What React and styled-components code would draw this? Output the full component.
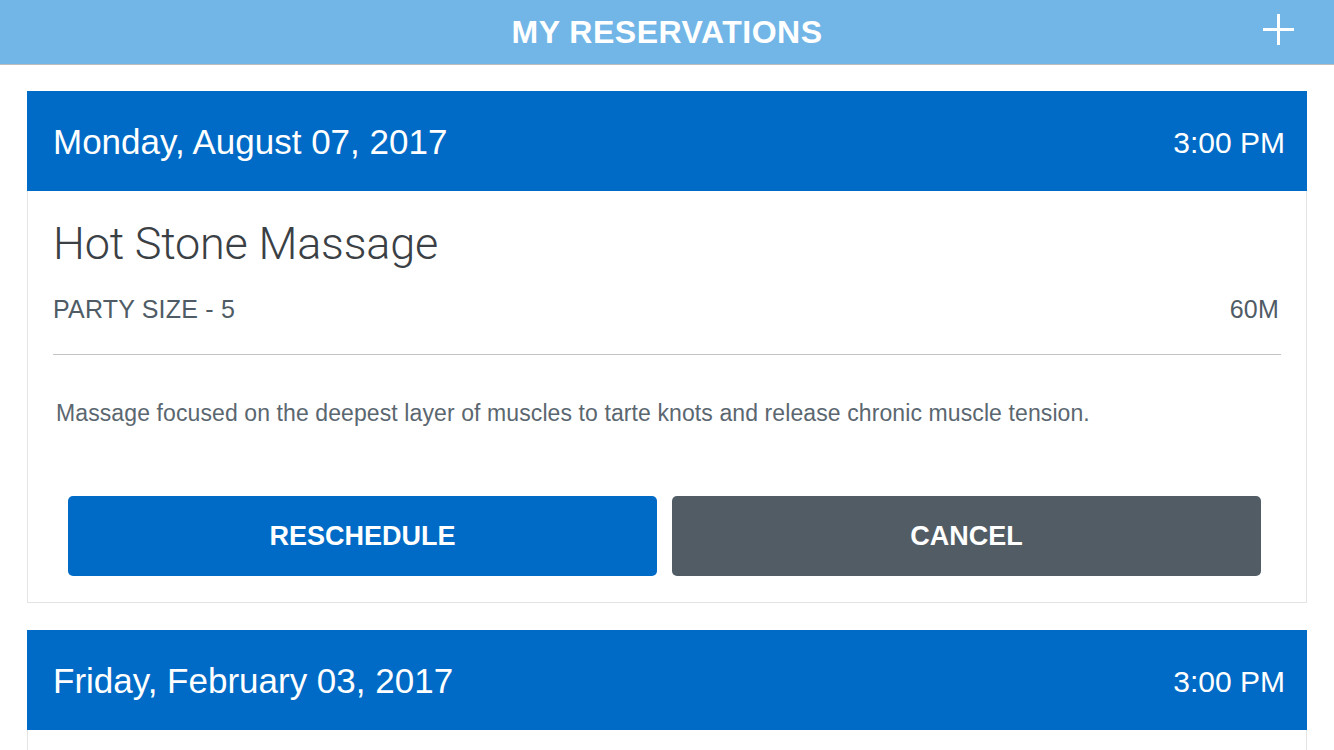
import React from "react";
import styled, { createGlobalStyle } from "styled-components";

const Global = createGlobalStyle`
  html, body { margin: 0; padding: 0; background: #ffffff; }
  body { font-family: "Liberation Sans", Arial, sans-serif; }
  * { box-sizing: border-box; }
`;

const Page = styled.div`
  width: 1334px;
  min-height: 750px;
  background: #ffffff;
  overflow: hidden;
`;

const TopBar = styled.header`
  position: relative;
  height: 65px;
  background: #72b6e7;
  border-bottom: 1px solid #bdbdbd;
  display: flex;
  align-items: center;
  justify-content: center;
`;

const TopTitle = styled.h1`
  margin: 0;
  font-family: "Liberation Sans", Arial, sans-serif;
  font-weight: 700;
  font-size: 32px;
  line-height: 32px;
  color: #ffffff;
  letter-spacing: 0.5px;
`;

const AddButton = styled.button`
  position: absolute;
  right: 38px;
  top: 12px;
  width: 35px;
  height: 35px;
  padding: 0;
  border: 0;
  background: transparent;
  display: flex;
  align-items: center;
  justify-content: center;
  cursor: pointer;
`;

const List = styled.main`
  display: flex;
  flex-direction: column;
  gap: 27px;
  padding: 26px 27px 0 27px;
`;

const Card = styled.section`
  display: flex;
  flex-direction: column;
`;

const CardHeader = styled.div`
  height: 100px;
  background: #006bc6;
  color: #ffffff;
  display: flex;
  align-items: center;
  justify-content: space-between;
  padding: 0 22px 0 26px;
`;

const DateText = styled.span`
  font-size: 35px;
  line-height: 35px;
  padding-top: 1px;
`;

const TimeText = styled.span`
  font-size: 30px;
  line-height: 30px;
  padding-top: 3px;
`;

const CardBody = styled.div`
  border: 1px solid #e4e4e4;
  border-top: 0;
  padding: 30px 25px 26px 25px;
  display: flex;
  flex-direction: column;
  min-height: ${(p) => (p.$collapsed ? "30px" : "auto")};
`;

const Title = styled.h2`
  margin: 0;
  font-family: Roboto, "Liberation Sans", sans-serif;
  font-weight: 300;
  font-size: 45px;
  line-height: 46px;
  letter-spacing: -0.2px;
  color: #3b4045;
`;

const MetaRow = styled.div`
  margin-top: 30px;
  display: flex;
  justify-content: space-between;
  font-size: 25px;
  line-height: 24px;
  letter-spacing: 0.2px;
  color: #4f5c65;
  padding: 0 2px 0 0;
`;

const Divider = styled.hr`
  margin: 33px 0 0 0;
  border: 0;
  height: 1px;
  background: #c4c4c4;
`;

const Description = styled.p`
  margin: 47px 0 0 0;
  padding-left: 3px;
  font-size: 23px;
  line-height: 22px;
  letter-spacing: 0.1px;
  color: #5b6770;
`;

const Actions = styled.div`
  margin: 72px 20px 0 15px;
  display: grid;
  grid-template-columns: 1fr 1fr;
  gap: 15px;
`;

const ActionButton = styled.button`
  height: 80px;
  border: 0;
  border-radius: 5px;
  background: ${(p) => (p.$variant === "secondary" ? "#515c64" : "#006bc6")};
  color: #ffffff;
  font-family: "Liberation Sans", Arial, sans-serif;
  font-weight: 700;
  font-size: 27px;
  padding-top: 2px;
  cursor: pointer;
`;

const PlusIcon = () => (
  <svg width="31" height="31" viewBox="0 0 31 31" aria-hidden="true">
    <path d="M15.5 0 V31 M0 15.5 H31" stroke="#ffffff" strokeWidth="3" fill="none" />
  </svg>
);

const reservations = [
  {
    date: "Monday, August 07, 2017",
    time: "3:00 PM",
    title: "Hot Stone Massage",
    party: "PARTY SIZE - 5",
    duration: "60M",
    description:
      "Massage focused on the deepest layer of muscles to tarte knots and release chronic muscle tension.",
    expanded: true,
  },
  {
    date: "Friday, February 03, 2017",
    time: "3:00 PM",
    expanded: false,
  },
];

export default function App() {
  return (
    <Page>
      <Global />
      <TopBar>
        <TopTitle>MY RESERVATIONS</TopTitle>
        <AddButton aria-label="Add reservation">
          <PlusIcon />
        </AddButton>
      </TopBar>
      <List>
        {reservations.map((r) => (
          <Card key={r.date}>
            <CardHeader>
              <DateText>{r.date}</DateText>
              <TimeText>{r.time}</TimeText>
            </CardHeader>
            {r.expanded ? (
              <CardBody>
                <Title>{r.title}</Title>
                <MetaRow>
                  <span>{r.party}</span>
                  <span>{r.duration}</span>
                </MetaRow>
                <Divider />
                <Description>{r.description}</Description>
                <Actions>
                  <ActionButton>RESCHEDULE</ActionButton>
                  <ActionButton $variant="secondary">CANCEL</ActionButton>
                </Actions>
              </CardBody>
            ) : (
              <CardBody $collapsed />
            )}
          </Card>
        ))}
      </List>
    </Page>
  );
}
